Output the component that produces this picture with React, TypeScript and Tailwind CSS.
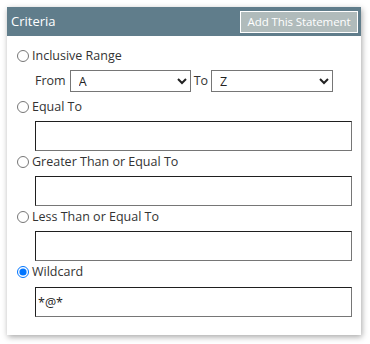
import React from "react";

const font = { fontFamily: '"Open Sans", "Noto Sans", sans-serif' };

function RadioRow({ label, checked, className }: { label: string; checked?: boolean; className?: string }) {
  return (
    <label className={`flex items-center h-[20px] ${className ?? ""}`}>
      <input type="radio" name="crit" defaultChecked={checked} className="m-0 ml-[1px] w-[12px] h-[12px]" />
      <span className="ml-[3px] text-[12.5px] text-[#333333]">{label}</span>
    </label>
  );
}

function TextBox({ value }: { value?: string }) {
  return (
    <input
      type="text"
      defaultValue={value}
      className="ml-[19px] block w-[317px] h-[30px] border border-t-[#1f1f1f] border-l-[#1f1f1f] border-b-[#767676] border-r-[#767676] px-[2px] text-[12.5px] text-[#222222] outline-none"
    />
  );
}

export default function App() {
  return (
    <div className="w-[370px] h-[344px] bg-white p-[7px]" style={font}>
      <div className="w-[354px] h-[328px] bg-white shadow-[1px_2px_6px_rgba(0,0,0,0.35)]">
        <div className="h-[29px] bg-[#607d8b] flex items-center justify-between pl-[4px] pr-[3px]">
          <span className="text-white text-[13px]">Criteria</span>
          <button className="w-[118px] h-[22px] bg-[#b0bbbb] border border-white text-white text-[11.5px] leading-none tracking-[-0.1px]">
            Add This Statement
          </button>
        </div>
        <div className="pl-[9px] pr-[9px]">
          <RadioRow label="Inclusive Range" className="mt-[10px]" />
          <div className="flex items-center ml-[19px] mt-[4px] h-[22px] text-[12.5px] text-[#333333]">
            <span>From</span>
            <select className="ml-[4px] w-[121px] h-[22px] border border-[#767676] text-[12.5px] text-[#222222] pl-[4px]" defaultValue="A">
              <option>A</option>
              <option>Z</option>
            </select>
            <span className="ml-[3px]">To</span>
            <select className="ml-[3px] w-[122px] h-[22px] border border-[#767676] text-[12.5px] text-[#222222] pl-[4px]" defaultValue="Z">
              <option>A</option>
              <option>Z</option>
            </select>
          </div>
          <RadioRow label="Equal To" className="mt-[5px] mb-[4px]" />
          <TextBox />
          <RadioRow label="Greater Than or Equal To" className="mt-[1px] mb-[4px]" />
          <TextBox />
          <RadioRow label="Less Than or Equal To" className="mt-[1px] mb-[4px]" />
          <TextBox />
          <RadioRow label="Wildcard" checked className="mt-[1px] mb-[5px]" />
          <TextBox value="*@*" />
        </div>
      </div>
    </div>
  );
}
